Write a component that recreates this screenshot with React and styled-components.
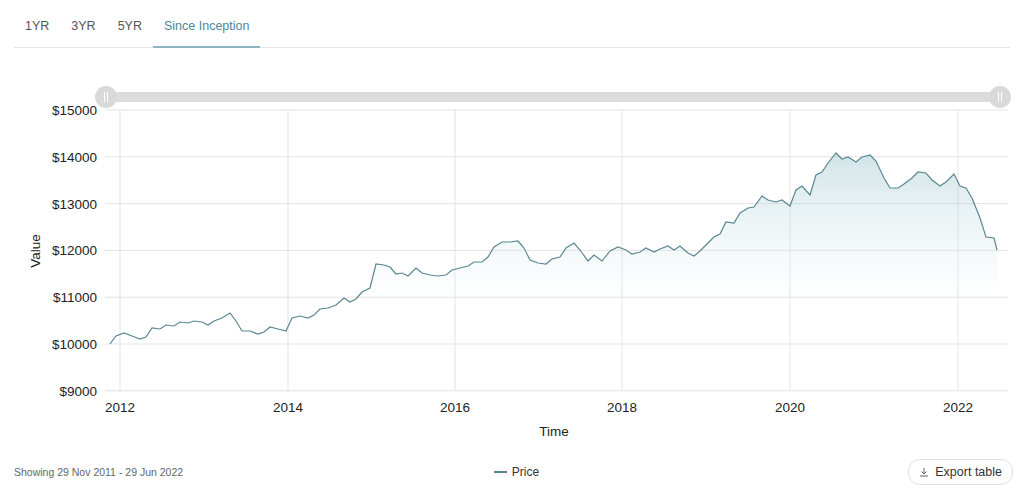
import styled, { createGlobalStyle } from "styled-components";

const Global = createGlobalStyle`
  body { margin: 0; background: #fff; font-family: "Liberation Sans", Arial, sans-serif; }
`;

const Page = styled.div`
  width: 1024px;
  height: 495px;
  overflow: hidden;
  display: flex;
  flex-direction: column;
`;

const Tabs = styled.div`
  display: flex;
  margin: 0 14px 0 14px;
  height: 47px;
  border-bottom: 1px solid #e6e6e6;
`;

const Tab = styled.div`
  padding: 0 11px;
  display: flex;
  align-items: center;
  font-size: 12.5px;
  color: ${(p) => (p.active ? "#4d8799" : "#555")};
  border-bottom: 2px solid ${(p) => (p.active ? "#8fb3bf" : "transparent")};
  margin-bottom: -1px;
  padding-top: 6px;
  box-sizing: border-box;
`;

const Chart = styled.svg`
  display: block;
  width: 1024px;
  height: 400px;
  font-family: "Liberation Sans", Arial, sans-serif;
`;

const Footer = styled.div`
  flex: 1;
  display: grid;
  grid-template-columns: 1fr auto 1fr;
  align-items: center;
  padding: 0 11px 0 14px;
`;

const Range = styled.div`
  font-size: 10.5px;
  color: #666;
`;

const Legend = styled.div`
  display: flex;
  align-items: center;
  gap: 5px;
  font-size: 12px;
  color: #333;
  margin-left: 6px;
`;

const Swatch = styled.span`
  width: 13px;
  height: 2px;
  background: #5b8793;
`;

const ExportButton = styled.button`
  justify-self: end;
  display: flex;
  align-items: center;
  gap: 6px;
  font: inherit;
  font-size: 12.5px;
  color: #333;
  background: #fff;
  border: 1px solid #e2e2e2;
  border-radius: 12px;
  padding: 5px 10px;
`;

const pts = [[110,344],[116,336],[124,333],[132,336],[140,339],[146,337],[152,328],[160,329],[166,325],[174,326],[180,322],[188,323],[194,321],[202,322],[208,325],[214,321],[222,318],[230,313],[236,321],[242,331],[250,331],[258,334],[264,332],[270,327],[278,329],[286,331],[292,318],[300,316],[308,318],[314,315],[320,309],[328,308],[336,305],[344,298],[350,302],[356,299],[362,292],[370,288],[376,264],[384,265],[390,267],[396,274],[402,273],[408,276],[416,268],[422,273],[430,275],[438,276],[446,275],[452,270],[460,268],[468,266],[474,262],[482,262],[488,257],[494,247],[502,242],[510,242],[518,241],[524,248],[530,260],[538,263],[546,264],[552,259],[560,257],[566,248],[574,243],[580,250],[588,261],[594,255],[602,261],[610,251],[618,247],[626,250],[632,254],[640,252],[646,248],[654,252],[660,249],[668,246],[674,250],[680,246],[688,253],[694,256],[700,251],[708,243],[714,237],[720,234],[726,222],[734,223],[740,213],[748,208],[754,207],[762,196],[768,200],[776,202],[782,200],[790,206],[796,190],[802,186],[810,195],[816,175],[822,172],[828,163],[836,153],[842,159],[848,157],[856,162],[862,157],[870,155],[876,161],[884,178],[890,188],[898,188],[904,184],[912,178],[918,172],[926,173],[932,180],[940,186],[946,182],[954,174],[960,186],[966,188],[972,198],[980,218],[986,237],[994,238],[997,250]];

const line = pts.map((p, i) => `${i ? "L" : "M"}${p[0]} ${p[1]}`).join(" ");
const area = `${line} L997 391 L110 391 Z`;

const yTicks = [15000, 14000, 13000, 12000, 11000, 10000, 9000];
const xTicks = [[120, "2012"], [288, "2014"], [455, "2016"], [622, "2018"], [790, "2020"], [958, "2022"]];
const yOf = (v) => 110 + ((15000 - v) / 1000) * 46.8;

function Handle({ x }) {
  return (
    <g>
      <circle cx={x} cy={97} r={11} fill="#d9d9d9" />
      <line x1={x - 1.5} y1={92} x2={x - 1.5} y2={102} stroke="#fff" strokeWidth="1" />
      <line x1={x + 1.5} y1={92} x2={x + 1.5} y2={102} stroke="#fff" strokeWidth="1" />
    </g>
  );
}

export default function App() {
  return (
    <Page>
      <Global />
      <Tabs>
        <Tab>1YR</Tab>
        <Tab>3YR</Tab>
        <Tab>5YR</Tab>
        <Tab active>Since Inception</Tab>
      </Tabs>
      <Chart viewBox="0 48 1024 400">
        <defs>
          <linearGradient id="fill" x1="0" y1="150" x2="0" y2="300" gradientUnits="userSpaceOnUse">
            <stop offset="0" stopColor="#a9ccd3" stopOpacity="0.55" />
            <stop offset="0.85" stopColor="#d7e8ec" stopOpacity="0.12" />
            <stop offset="1" stopColor="#ffffff" stopOpacity="0" />
          </linearGradient>
        </defs>
        <rect x="105" y="92" width="895" height="10" rx="5" fill="#dcdcdc" />
        <Handle x={106} />
        <Handle x={1000} />
        {yTicks.map((v) => (
          <g key={v}>
            <line x1="105" x2="1008" y1={yOf(v)} y2={yOf(v)} stroke="#e3e3e3" />
            <text x="97" y={yOf(v) + 5} textAnchor="end" fontSize="13.5" fill="#222">${v}</text>
          </g>
        ))}
        {xTicks.map(([x, t]) => (
          <g key={t}>
            <line x1={x} x2={x} y1="110" y2="391" stroke="#e3e3e3" />
            <text x={x} y="412" textAnchor="middle" fontSize="13.5" fill="#222">{t}</text>
          </g>
        ))}
        <path d={area} fill="url(#fill)" />
        <path d={line} fill="none" stroke="#5b8793" strokeWidth="1.2" />
        <text x="554" y="436" textAnchor="middle" fontSize="13.5" fill="#222">Time</text>
        <text transform="translate(40 251) rotate(-90)" textAnchor="middle" fontSize="13.5" fill="#222">Value</text>
      </Chart>
      <Footer>
        <Range>Showing 29 Nov 2011 - 29 Jun 2022</Range>
        <Legend><Swatch />Price</Legend>
        <ExportButton>
          <svg width="10" height="10" viewBox="0 0 10 10" fill="none" stroke="#666" strokeWidth="1">
            <path d="M5 1v6M2.5 4.5L5 7l2.5-2.5M1 9h8" />
          </svg>
          Export table
        </ExportButton>
      </Footer>
    </Page>
  );
}
